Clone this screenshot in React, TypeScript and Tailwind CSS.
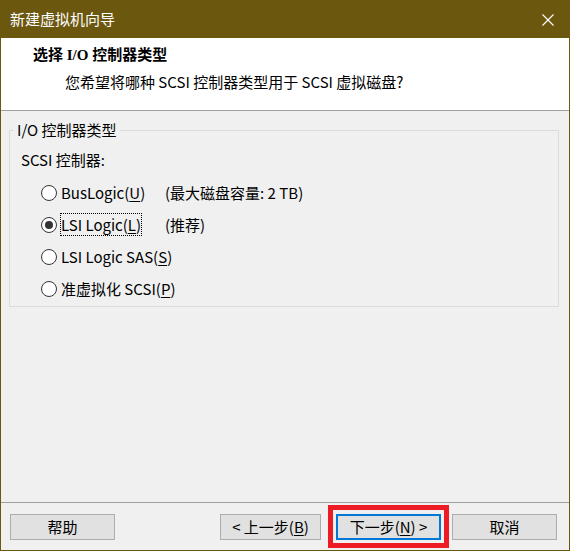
import { ReactNode } from 'react';

const font = { fontFamily: '"Noto Sans CJK SC", "Noto Sans", sans-serif' };

function Radio({ checked, label, note, focused }: { checked?: boolean; label: ReactNode; note?: string; focused?: boolean }) {
    return (
        <div className="flex h-[32px] items-center whitespace-nowrap pl-[31px]">
            <span className="flex h-[16px] w-[16px] shrink-0 items-center justify-center rounded-full border border-[#333333] bg-white">
                {checked && <span className="h-[8px] w-[8px] rounded-full bg-[#333333]" />}
            </span>
            <div className="ml-[3px] min-w-[105px]">
                <span className={`border px-0 leading-[16px] ${focused ? 'border-dotted border-black' : 'border-transparent'}`}>{label}</span>
            </div>
            {note && <span className="leading-[16px]">{note}</span>}
        </div>
    )
}

function Button({ children, focused, className = '' }: { children: ReactNode; focused?: boolean; className?: string }) {
    return (
        <button
            className={`flex h-[26px] items-center justify-center whitespace-nowrap bg-[#e1e1e1] text-[15px] text-black ${focused ? 'border-2 border-[#0078d7]' : 'border border-[#adadad]'} ${className}`}
        >
            {children}
        </button>
    )
}

export default function App() {
    return (
        <div className="flex h-[551px] w-[570px] flex-col bg-[#6c570f] px-[1px] pb-[1px] text-[15px] text-black" style={font}>
            {/* title bar */}
            <div className="-mx-[1px] flex h-[38px] shrink-0 items-center justify-between pl-[10px] pr-[16px] text-white">
                <span className="leading-[20px]">新建虚拟机向导</span>
                <svg width="12" height="12" viewBox="0 0 12 12" className="mt-[1px]">
                    <path d="M0.5 0.5 L11.5 11.5 M11.5 0.5 L0.5 11.5" stroke="white" strokeWidth="1.1" />
                </svg>
            </div>

            <div className="flex flex-1 flex-col bg-[#f0f0f0]">
                {/* header */}
                <div className="h-[73px] shrink-0 border-b border-[#a0a0a0] bg-white">
                    <div className="pl-[32px] pt-[7px] text-[15px] font-bold leading-[20px]" style={{ fontFamily: '"Liberation Serif", "Noto Sans CJK SC", serif' }}>
                        选择 I/O 控制器类型
                    </div>
                    <div className="pl-[64px] pt-[7px] leading-[20px]">
                        您希望将哪种 SCSI 控制器类型用于 SCSI 虚拟磁盘?
                    </div>
                </div>

                {/* body */}
                <div className="flex-1">
                    <fieldset className="ml-[8px] mr-[10px] mt-[9px] border border-[#dcdcdc] p-0 pb-[1px]">
                        <legend className="ml-[4px] px-[3px] leading-[20px]">I/O 控制器类型</legend>
                        <div className="pl-[11px] pt-[10px] leading-[20px]">SCSI 控制器:</div>
                        <div className="mt-[7px]">
                            <Radio label={<>BusLogic(<u className="underline-offset-2">U</u>)</>} note="(最大磁盘容量: 2 TB)" />
                            <Radio checked focused label={<>LSI Logic(<u className="underline-offset-2">L</u>)</>} note="(推荐)" />
                            <Radio label={<>LSI Logic SAS(<u className="underline-offset-2">S</u>)</>} />
                            <Radio label={<>准虚拟化 SCSI(<u className="underline-offset-2">P</u>)</>} />
                        </div>
                    </fieldset>
                </div>

                {/* footer */}
                <div className="flex h-[48px] shrink-0 items-start border-t border-[#a0a0a0] pl-[9px] pr-[12px] pt-[11px]">
                    <Button className="w-[105px]">帮助</Button>
                    <div className="flex-1" />
                    <Button className="w-[101px]">&lt; 上一步(<u className="underline-offset-2">B</u>)</Button>
                    <div className="relative ml-[15px]">
                        <Button focused className="w-[105px]">下一步(<u className="underline-offset-2">N</u>) &gt;</Button>
                        <div className="pointer-events-none absolute -bottom-[8px] -left-[8px] -right-[8px] -top-[9px] border-[5px] border-[#ed1c24]" />
                    </div>
                    <Button className="ml-[11px] w-[105px]">取消</Button>
                </div>
            </div>
        </div>
    )
}
